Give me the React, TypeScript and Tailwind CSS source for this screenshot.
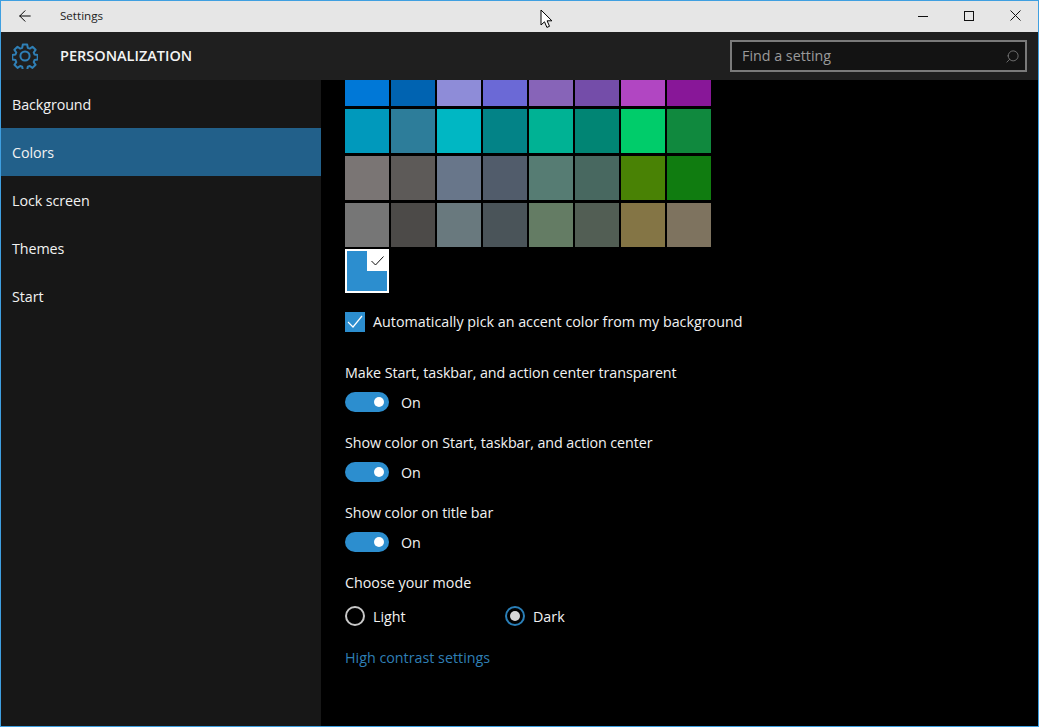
import { ArrowLeft, Search } from 'lucide-react'

const font = 'font-["Open_Sans","Noto_Sans",sans-serif]'
const accent = '#2c8ecf'

const navItems = ['Background', 'Colors', 'Lock screen', 'Themes', 'Start']

const swatches = [
  ['#0078d7', '#0063b1', '#8e8cd8', '#6b69d6', '#8764b8', '#744da9', '#b146c2', '#881798'],
  ['#0099bc', '#2d7d9a', '#00b7c3', '#038387', '#00b294', '#018574', '#00cc6a', '#10893e'],
  ['#7a7574', '#5d5a58', '#68768a', '#515c6b', '#567c73', '#486860', '#498205', '#107c10'],
  ['#767676', '#4c4a48', '#69797e', '#4a5459', '#647c64', '#525e54', '#847545', '#7e735f'],
]

const toggles = [
  'Make Start, taskbar, and action center transparent',
  'Show color on Start, taskbar, and action center',
  'Show color on title bar',
]

function Gear() {
  // eight tooth outline, same stroke weight as the shell icon
  return (
    <svg width="26" height="26" viewBox="0 0 26 26" fill="none" stroke="#2f7fb5" strokeWidth="2" strokeLinejoin="round">
      <circle cx="13" cy="13" r="4.6" />
      <path d="M10.8 1.6h4.4l.6 3.2 2 .8 2.7-1.9 3.1 3.1-1.9 2.7.8 2 3.2.6v4.4l-3.2.6-.8 2 1.9 2.7-3.1 3.1-2.7-1.9-2 .8-.6 3.2h-4.4l-.6-3.2-2-.8-2.7 1.9-3.1-3.1 1.9-2.7-.8-2-3.2-.6v-4.4l3.2-.6.8-2-1.9-2.7 3.1-3.1 2.7 1.9 2-.8z" />
    </svg>
  )
}

function Toggle({ label }: { label: string }) {
  return (
    <div className="flex flex-col">
      <div className="h-5 leading-[22px] text-[14.3px] tracking-[-0.08px] text-[#f2f2f2]">{label}</div>
      <div className="mt-[10px] flex items-center h-5">
        <div className="w-11 h-5 rounded-full flex items-center justify-end pr-[5px]" style={{ background: accent }}>
          <div className="w-[10px] h-[10px] rounded-full bg-white" />
        </div>
        <span className="ml-3 mt-[2px] text-[14.3px] text-[#f2f2f2]">On</span>
      </div>
    </div>
  )
}

export default function App() {
  return (
    <div className={`${font} w-[1039px] h-[727px] relative overflow-hidden flex flex-col border border-[#3f9fe0] bg-black`}>
      {/* title bar */}
      <div className="h-[31px] shrink-0 bg-[#e6e6e6] flex items-center pb-[2px] text-black">
        <div className="w-[48px] flex justify-center">
          <ArrowLeft size={18} strokeWidth={1.3} />
        </div>
        <span className="ml-[11px] text-[11.6px] text-[#222]">Settings</span>
        <div className="ml-auto flex items-center">
          <div className="w-[46px] flex justify-center">
            <svg width="10" height="10" viewBox="0 0 10 10" stroke="#111" strokeWidth="1"><path d="M0 5.5h10" /></svg>
          </div>
          <div className="w-[46px] flex justify-center">
            <div className="w-[10px] h-[10px] border border-[#111]" />
          </div>
          <div className="w-[46px] flex justify-center">
            <svg width="11" height="11" viewBox="0 0 11 11" stroke="#111" strokeWidth="1"><path d="M.5.5l10 10M10.5.5l-10 10" /></svg>
          </div>
        </div>
      </div>

      {/* header */}
      <div className="h-[48px] shrink-0 bg-[#1f1f1f] flex items-center pl-[11px] pr-[11px]">
        <Gear />
        <span className="ml-[22px] text-[14.5px] font-semibold text-[#f4f4f4]">PERSONALIZATION</span>
        <div className="ml-auto w-[297px] h-[32px] border-2 border-[#7a7a7a] bg-[#131313] flex items-center pl-[10px] pr-[5px]">
          <span className="text-[14.3px] text-[#9a9a9a]">Find a setting</span>
          <Search size={15} strokeWidth={1.2} className="ml-auto text-[#8a8a8a] -scale-x-100" />
        </div>
      </div>

      <div className="flex-1 flex min-h-0">
        {/* nav */}
        <div className="w-[320px] shrink-0 bg-[#171717]">
          {navItems.map(item => (
            <div key={item} className={`h-12 flex items-center pl-[11px] pt-[2px] text-[14.3px] tracking-[-0.08px] text-[#f2f2f2] ${item === 'Colors' ? 'bg-[#22608a]' : ''}`}>
              {item}
            </div>
          ))}
        </div>

        {/* content, scrolled so the first swatch row is cut off */}
        <div className="flex-1 pl-[24px] overflow-hidden">
          <div className="-mt-[18px] flex flex-col gap-[3px]">
            {swatches.map((row, i) => (
              <div key={i} className="flex gap-[2px]">
                {row.map(c => <div key={c} className="w-11 h-11" style={{ background: c }} />)}
              </div>
            ))}
          </div>
          <div className="relative mt-[2px] w-11 h-11 border-2 border-white" style={{ background: accent }}>
            <div className="absolute -top-px -right-px w-[21px] h-[21px] bg-white flex items-center justify-center">
              <svg width="13" height="10" viewBox="0 0 13 10" fill="none" stroke="#111" strokeWidth="1">
                <path d="M.5 5l4 4 8-8.5" />
              </svg>
            </div>
          </div>

          <div className="mt-[19px] flex items-center h-5">
            <div className="w-5 h-5 flex items-center justify-center" style={{ background: accent }}>
              <svg width="16" height="14" viewBox="0 0 16 14" fill="none" stroke="#fff" strokeWidth="1.2">
                <path d="M1 7l5 5 9-11" />
              </svg>
            </div>
            <span className="ml-2 leading-[22px] text-[14.3px] text-[#f2f2f2]">Automatically pick an accent color from my background</span>
          </div>

          <div className="mt-[30px] flex flex-col gap-5">
            {toggles.map(t => <Toggle key={t} label={t} />)}
          </div>

          <div className="mt-5 h-5 leading-[22px] text-[14.3px] text-[#f2f2f2]">Choose your mode</div>
          <div className="mt-[14px] flex items-center h-5">
            <div className="w-[160px] flex items-center">
              <div className="w-5 h-5 rounded-full border-2 border-[#c8c8c8]" />
              <span className="ml-2 mt-[2px] text-[14.3px] text-[#f2f2f2]">Light</span>
            </div>
            <div className="flex items-center">
              <div className="w-5 h-5 rounded-full border-2 border-[#2a7fb8] flex items-center justify-center">
                <div className="w-[10px] h-[10px] rounded-full bg-[#d8d8d8]" />
              </div>
              <span className="ml-2 mt-[2px] text-[14.3px] text-[#f2f2f2]">Dark</span>
            </div>
          </div>
          <div className="mt-[21px] h-5 leading-[22px] text-[14.3px] text-[#2f7fb5]">High contrast settings</div>
        </div>
      </div>

      {/* mouse pointer caught in the shot */}
      <svg className="absolute left-[539px] top-[8px]" width="14" height="20" viewBox="0 0 14 20" fill="#fff" stroke="#000" strokeWidth="1">
        <path d="M1 1v15l3.5-3.2 2.4 5.6 2.6-1.1-2.4-5.5h4.8z" />
      </svg>
    </div>
  )
}
